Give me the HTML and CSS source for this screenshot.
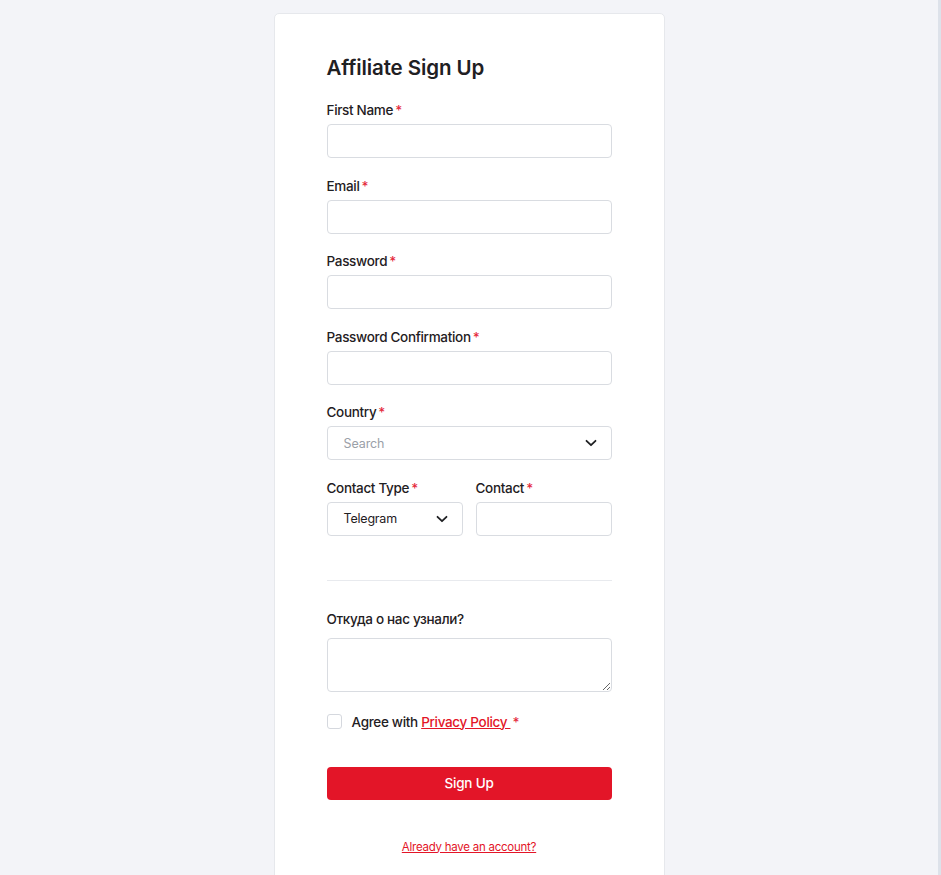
FILE: index.html
```html
<!DOCTYPE html>
<html lang="en">
<head>
<meta charset="utf-8">
<title>Affiliate Sign Up</title>
<link rel="stylesheet" href="styles.css">
</head>
<body>
<div class="page">
  <form class="card">
    <h1 class="title">Affiliate Sign Up</h1>

    <div class="field">
      <label class="label">First Name<span class="req">*</span></label>
      <input class="input" type="text">
    </div>
    <div class="field">
      <label class="label">Email<span class="req">*</span></label>
      <input class="input" type="email">
    </div>
    <div class="field">
      <label class="label">Password<span class="req">*</span></label>
      <input class="input" type="password">
    </div>
    <div class="field">
      <label class="label">Password Confirmation<span class="req">*</span></label>
      <input class="input" type="password">
    </div>
    <div class="field">
      <label class="label">Country<span class="req">*</span></label>
      <div class="input select">
        <span class="placeholder">Search</span>
        <svg class="chev" width="12" height="8" viewBox="0 0 12 8"><path d="M1.5 1.8 6 6.2l4.5-4.4" fill="none" stroke="#1f2023" stroke-width="1.8" stroke-linecap="round" stroke-linejoin="round"/></svg>
      </div>
    </div>
    <div class="row">
      <div class="field">
        <label class="label">Contact Type<span class="req">*</span></label>
        <div class="input select">
          <span class="value">Telegram</span>
          <svg class="chev" width="12" height="8" viewBox="0 0 12 8"><path d="M1.5 1.8 6 6.2l4.5-4.4" fill="none" stroke="#1f2023" stroke-width="1.8" stroke-linecap="round" stroke-linejoin="round"/></svg>
        </div>
      </div>
      <div class="field">
        <label class="label">Contact<span class="req">*</span></label>
        <input class="input" type="text">
      </div>
    </div>

    <hr class="divider">

    <div class="field">
      <label class="label label-wide">Откуда о нас узнали?</label>
      <textarea class="input textarea"></textarea>
    </div>

    <label class="agree">
      <span class="checkbox"></span>
      <span>Agree with <a class="policy" href="#">Privacy Policy </a> <span class="req">*</span></span>
    </label>

    <button class="btn" type="button">Sign Up</button>

    <a class="login" href="#">Already have an account?</a>
  </form>
</div>
</body>
</html>
```

FILE: styles.css
```css
* { box-sizing: border-box; }

html, body {
  margin: 0;
  padding: 0;
  height: 100%;
  overflow: hidden;
}

body {
  background: #f3f4f8;
  font-family: Inter, "Noto Sans", "Liberation Sans", sans-serif;
  color: #1f2023;
  border-right: 3px solid #dde2ea;
}

.page {
  display: flex;
  justify-content: center;
  padding-top: 13px;
  height: 100%;
}

.card {
  width: 391px;
  background: #ffffff;
  border: 1px solid #e6e8ec;
  border-radius: 5px;
  padding: 40px 52px 120px;
  display: flex;
  flex-direction: column;
  align-self: flex-start;
}

.title {
  margin: 0 0 18px;
  font-size: 20.5px;
  line-height: 28px;
  font-weight: 600;
  letter-spacing: -0.1px;
}

.field {
  display: flex;
  flex-direction: column;
  margin-bottom: 17.5px;
}

.label {
  font-size: 13.5px;
  line-height: 20px;
  font-weight: 450;
  letter-spacing: -0.32px;
  margin-bottom: 4px;
}

.label-wide { margin-bottom: 9px; }

.req {
  color: #e5293b;
  margin-left: 2px;
}

.input {
  height: 34px;
  width: 100%;
  border: 1px solid #d9dce1;
  border-radius: 4px;
  background: #fff;
  font: inherit;
  font-size: 12.5px;
  padding: 0 16px;
  outline: none;
}

.select {
  display: flex;
  align-items: center;
  justify-content: space-between;
  padding-right: 14px;
}

.placeholder { color: #9aa0a8; letter-spacing: -0.1px; }
.value { color: #1f2023; letter-spacing: -0.2px; }

.chev { display: block; }

.row {
  display: grid;
  grid-template-columns: 1fr 1fr;
  column-gap: 13px;
}

.divider {
  border: 0;
  border-top: 1px solid #e8eaee;
  margin: 27px 0 28px;
}

.textarea {
  height: 54px;
  padding: 8px 16px;
  resize: vertical;
  margin: 0;
}

.agree {
  display: flex;
  align-items: center;
  gap: 10px;
  font-size: 13.5px;
  font-weight: 450;
  letter-spacing: -0.32px;
  line-height: 20px;
  margin-top: 2px;
}

.checkbox {
  width: 15px;
  height: 15px;
  border: 1px solid #d5d8de;
  border-radius: 3px;
  background: #fff;
}

.policy {
  color: #e31528;
  text-decoration: underline;
}

.btn {
  margin-top: 35px;
  height: 33px;
  width: 100%;
  border: 0;
  border-radius: 4px;
  background: #e31528;
  color: #fff;
  font: inherit;
  font-size: 13.5px;
  font-weight: 450;
  letter-spacing: -0.2px;
}

.login {
  align-self: center;
  margin-top: 39px;
  font-size: 11.5px;
  line-height: 16px;
  font-weight: 400;
  letter-spacing: -0.25px;
  color: #e31528;
  text-decoration: underline;
}
```
